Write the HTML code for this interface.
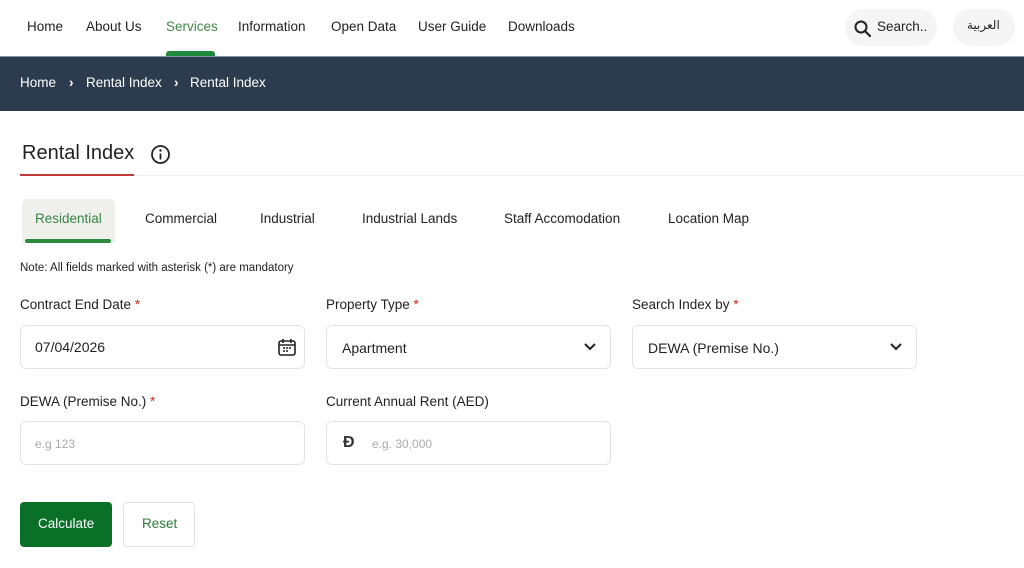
<!DOCTYPE html>
<html><head><meta charset="utf-8"><style>
*{box-sizing:border-box;margin:0;padding:0}
body{width:1024px;height:568px;overflow:hidden;background:#fff;font-family:"Liberation Sans","Noto Sans CJK SC",sans-serif;color:#222;position:relative}
.a{position:absolute;white-space:nowrap}
.nav{font-size:13.5px;top:19px}
.bar{position:absolute;left:0;top:56px;width:1024px;height:55px;background:#2c3b4d;border-top:1px solid #8893a0}
.bc{color:#fff;font-size:13.5px;top:75px}
.lbl{font-size:13.5px;top:297px;color:#222}
.lbl span{color:#d02a2a}
.inp{position:absolute;height:44px;border:1px solid #e3e3e3;border-radius:6px;background:#fff}
.val{font-size:14px;color:#222}
.ph{font-size:12px;color:#aaa}
.tab{font-size:13.5px;top:211px}
</style></head><body>
<div class="a nav" style="left:27px">Home</div>
<div class="a nav" style="left:86px">About Us</div>
<div class="a nav" style="left:166px;color:#3f8a4b">Services</div>
<div class="a nav" style="left:238px">Information</div>
<div class="a nav" style="left:331px">Open Data</div>
<div class="a nav" style="left:418px">User Guide</div>
<div class="a nav" style="left:508px">Downloads</div>
<div class="a" style="left:166px;top:51px;width:49px;height:5px;background:#1f8a3c;border-radius:3px 3px 0 0"></div>
<div class="a" style="left:845px;top:9px;width:92px;height:37px;border-radius:18px;background:#f5f5f5"></div>
<svg class="a" style="left:853px;top:19px" width="20" height="20" viewBox="0 0 20 20"><circle cx="8" cy="8" r="5.5" fill="none" stroke="#222" stroke-width="2"/><path d="M12 12l5 5" stroke="#222" stroke-width="2.2" stroke-linecap="round"/></svg>
<div class="a" style="left:877px;top:19px;font-size:13.5px">Search..</div>
<div class="a" style="left:953px;top:9px;width:62px;height:37px;border-radius:18px;background:#f5f5f5"></div>
<div class="a" style="left:967px;top:18px;font-size:12px;font-family:'DejaVu Sans',sans-serif">العربية</div>
<div class="bar"></div>
<div class="a bc" style="left:20px">Home</div>
<div class="a bc" style="left:69px;font-weight:bold">›</div>
<div class="a bc" style="left:86px">Rental Index</div>
<div class="a bc" style="left:174px;font-weight:bold">›</div>
<div class="a bc" style="left:190px">Rental Index</div>
<div class="a" style="left:22px;top:142px;font-size:20px;color:#222">Rental Index</div>
<svg class="a" style="left:150px;top:144px" width="21" height="21" viewBox="0 0 21 21"><circle cx="10.5" cy="10.5" r="8.5" fill="none" stroke="#222" stroke-width="1.8"/><circle cx="10.5" cy="6.5" r="1.2" fill="#222"/><path d="M10.5 9.5v6" stroke="#222" stroke-width="1.8"/></svg>
<div class="a" style="left:20px;top:175px;width:1004px;height:1px;background:#eee"></div>
<div class="a" style="left:20px;top:174px;width:114px;height:2px;background:#c0393b"></div>
<div class="a" style="left:22px;top:199px;width:93px;height:44px;background:#eff0ec;border-radius:5px 5px 0 0"></div>
<div class="a" style="left:25px;top:239px;width:86px;height:4px;background:#2a8a3e;border-radius:2px"></div>
<div class="a tab" style="left:35px;color:#3a8447">Residential</div>
<div class="a tab" style="left:145px">Commercial</div>
<div class="a tab" style="left:260px">Industrial</div>
<div class="a tab" style="left:362px">Industrial Lands</div>
<div class="a tab" style="left:504px">Staff Accomodation</div>
<div class="a tab" style="left:668px">Location Map</div>
<div class="a" style="left:20px;top:262px;font-size:11.5px">Note: All fields marked with asterisk (*) are mandatory</div>
<div class="a lbl" style="left:20px">Contract End Date <span>*</span></div>
<div class="a lbl" style="left:326px">Property Type <span>*</span></div>
<div class="a lbl" style="left:632px">Search Index by <span>*</span></div>
<div class="inp" style="left:20px;top:325px;width:285px"></div>
<div class="a val" style="left:35px;top:339px">07/04/2026</div>
<svg class="a" style="left:277px;top:337px" width="20" height="20" viewBox="0 0 20 20"><rect x="2" y="4" width="16" height="14" rx="2" fill="none" stroke="#222" stroke-width="1.6"/><path d="M2 8h16M6 2v4M14 2v4" stroke="#222" stroke-width="1.6"/><path d="M6 11h2M9 11h2M12 11h2M6 14h2M9 14h2" stroke="#222" stroke-width="1.4"/></svg>
<div class="inp" style="left:326px;top:325px;width:285px"></div>
<div class="a val" style="left:342px;top:340px">Apartment</div>
<svg class="a" style="left:583px;top:341px" width="14" height="12" viewBox="0 0 14 12"><path d="M2 3l5 5 5-5" fill="none" stroke="#222" stroke-width="2"/></svg>
<div class="inp" style="left:632px;top:325px;width:285px"></div>
<div class="a val" style="left:648px;top:340px">DEWA (Premise No.)</div>
<svg class="a" style="left:889px;top:341px" width="14" height="12" viewBox="0 0 14 12"><path d="M2 3l5 5 5-5" fill="none" stroke="#222" stroke-width="2"/></svg>
<div class="a lbl" style="left:20px;top:394px">DEWA (Premise No.) <span>*</span></div>
<div class="a lbl" style="left:326px;top:394px">Current Annual Rent (AED)</div>
<div class="inp" style="left:20px;top:421px;width:285px"></div>
<div class="a ph" style="left:35px;top:437px">e.g 123</div>
<div class="inp" style="left:326px;top:421px;width:285px"></div>
<div class="a" style="left:343px;top:434px;font-size:16px;color:#333;font-weight:bold">Đ</div>
<div class="a ph" style="left:372px;top:437px">e.g. 30,000</div>
<div class="a" style="left:20px;top:502px;width:92px;height:45px;background:#0a7028;border-radius:4px"></div>
<div class="a" style="left:38px;top:516px;font-size:13.5px;color:#fff">Calculate</div>
<div class="a" style="left:123px;top:502px;width:72px;height:45px;border:1px solid #e3e3e3;border-radius:4px"></div>
<div class="a" style="left:142px;top:516px;font-size:13.5px;color:#2f7d3c">Reset</div>
</body></html>
